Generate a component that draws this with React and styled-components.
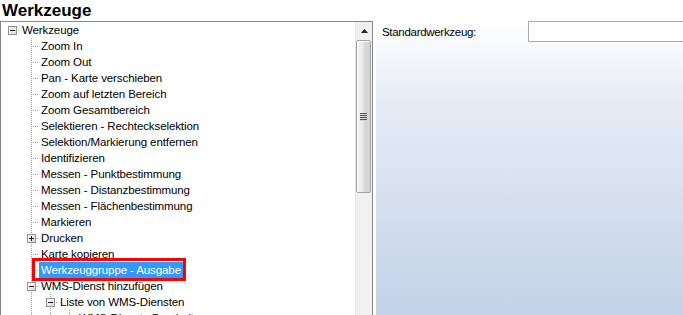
import React from 'react';
import styled, { createGlobalStyle } from 'styled-components';

const GlobalStyle = createGlobalStyle`
    html, body {
        margin: 0;
        padding: 0;
        background: #fff;
        overflow: hidden;
    }
    body {
        font-family: "Liberation Sans", Arial, sans-serif;
    }
`;

const Page = styled.div`
    display: flex;
    flex-direction: column;
    height: 100vh;
`;

const Title = styled.div`
    height: 21px;
    line-height: 21px;
    padding-left: 2px;
    font-size: 17px;
    font-weight: bold;
    color: #000;
`;

const Main = styled.div`
    flex: 1;
    display: flex;
    min-height: 0;
`;

const TreeBox = styled.div`
    width: 373px;
    box-sizing: border-box;
    border: 1px solid #828790;
    border-bottom: none;
    display: flex;
    background: #fff;
`;

const TreeList = styled.div`
    flex: 1;
    overflow: hidden;
    font-size: 11.5px;
    letter-spacing: -0.1px;
    color: #000;
`;

const Row = styled.div`
    display: flex;
    height: 16px;
`;

const dots = (dir) =>
    `repeating-linear-gradient(${dir}, #a0a0a0 0 1px, transparent 1px 2px)`;

const Guide = styled.div`
    width: 19px;
    flex: none;
    background-image: ${(p) => (p.$line ? dots('to bottom') : 'none')};
    background-size: 1px 16px;
    background-position: 11px 0;
    background-repeat: no-repeat;
`;

const Joint = styled.div`
    width: 19px;
    flex: none;
    display: flex;
    align-items: center;
    background-image: ${(p) =>
        p.$root ? dots('to right') : `${dots('to bottom')}, ${dots('to right')}`};
    background-size: ${(p) =>
        p.$root ? '8px 1px' : `1px ${p.$next ? 16 : 8}px, 8px 1px`};
    background-position: ${(p) => (p.$root ? '11px 8px' : '11px 0, 11px 8px')};
    background-repeat: no-repeat;
`;

const ExpanderIcon = styled.svg`
    margin-left: 7px;
    display: block;
`;

const Label = styled.div`
    position: relative;
    padding: 0 2px;
    line-height: 16px;
    white-space: nowrap;
    background: ${(p) => (p.$selected ? '#3399ff' : 'transparent')};
    color: ${(p) => (p.$selected ? '#fff' : '#000')};

    ${(p) =>
        p.$marked &&
        `
        &::after {
            content: '';
            position: absolute;
            top: -4px;
            bottom: -3px;
            left: -7px;
            right: -3px;
            border: 3px solid #f00;
        }
    `}
`;

const ScrollBar = styled.div`
    width: 17px;
    flex: none;
    display: flex;
    flex-direction: column;
    background: #f0f0f0;
    border-left: 1px solid #e6e6e6;
    box-sizing: border-box;
`;

const ArrowButton = styled.div`
    height: 18px;
    display: flex;
    align-items: center;
    justify-content: center;
`;

const Thumb = styled.div`
    height: 153px;
    margin: 0 1px 0 0;
    box-sizing: border-box;
    border: 1px solid #a3a3a3;
    border-radius: 2px;
    background: linear-gradient(to right, #f4f4f4 0%, #eaeaea 45%, #dadada 55%, #d2d2d2 100%);
    box-shadow: inset 1px 1px 0 #fbfbfb;
    display: flex;
    align-items: center;
    justify-content: center;
`;

const Grip = styled.div`
    width: 7px;
    height: 8px;
    background: repeating-linear-gradient(to bottom, #555 0 1px, #d8d8d8 1px 2px);
`;

const Gap = styled.div`
    width: 3px;
    flex: none;
    background: #fff;
`;

const SidePanel = styled.div`
    flex: 1;
    overflow: hidden;
    padding-left: 6px;
    background: linear-gradient(
        to bottom,
        #ffffff 0%,
        #f6f8fb 10%,
        #e6ecf5 27%,
        #c2d2e8 100%
    );
`;

const FieldRow = styled.div`
    display: flex;
    align-items: center;
    height: 21px;
    font-size: 11.5px;
    letter-spacing: -0.3px;
`;

const FieldLabel = styled.label`
    width: 146px;
    flex: none;
    color: #000;
`;

const FieldInput = styled.input`
    flex: none;
    width: 220px;
    height: 21px;
    box-sizing: border-box;
    border: 1px solid #ababab;
    background: #fff;
    padding: 0 3px;
    font: inherit;
    outline: none;
`;

const tree = {
    label: 'Werkzeuge',
    open: true,
    children: [
        { label: 'Zoom In' },
        { label: 'Zoom Out' },
        { label: 'Pan - Karte verschieben' },
        { label: 'Zoom auf letzten Bereich' },
        { label: 'Zoom Gesamtbereich' },
        { label: 'Selektieren - Rechteckselektion' },
        { label: 'Selektion/Markierung entfernen' },
        { label: 'Identifizieren' },
        { label: 'Messen - Punktbestimmung' },
        { label: 'Messen - Distanzbestimmung' },
        { label: 'Messen - Flächenbestimmung' },
        { label: 'Markieren' },
        { label: 'Drucken', closed: true },
        { label: 'Karte kopieren' },
        { label: 'Werkzeuggruppe - Ausgabe', selected: true },
        {
            label: 'WMS-Dienst hinzufügen',
            open: true,
            more: true,
            children: [
                {
                    label: 'Liste von WMS-Diensten',
                    open: true,
                    more: true,
                    children: [{ label: 'WMS-Dienste Bearbeiten', more: true }],
                },
            ],
        },
    ],
};

function flatten(node, level, guides, hasNext, out) {
    out.push({ ...node, level, guides, hasNext });
    if (node.open && node.children) {
        node.children.forEach((child, i) => {
            const next = i < node.children.length - 1 || !!child.more;
            flatten(child, level + 1, level === 0 ? [] : [...guides, hasNext], next, out);
        });
    }
    return out;
}

const rows = flatten(tree, 0, [], false, []);

function Expander({ open }) {
    return (
        <ExpanderIcon width="9" height="9" viewBox="0 0 9 9">
            <rect x="0.5" y="0.5" width="8" height="8" fill="#fff" stroke="#919191" />
            <rect x="1" y="1" width="7" height="7" fill="url(#expGrad)" />
            <rect x="2" y="4" width="5" height="1" fill="#1a1a1a" />
            {!open && <rect x="4" y="2" width="1" height="5" fill="#1a1a1a" />}
        </ExpanderIcon>
    );
}

export default function App() {
    return (
        <Page>
            <GlobalStyle />
            <svg width="0" height="0" style={{ position: 'absolute' }}>
                <defs>
                    <linearGradient id="expGrad" x1="0" y1="0" x2="1" y2="1">
                        <stop offset="0" stopColor="#ffffff" />
                        <stop offset="1" stopColor="#d9d9d9" />
                    </linearGradient>
                </defs>
            </svg>
            <Title>Werkzeuge</Title>
            <Main>
                <TreeBox>
                    <TreeList>
                        {rows.map((row, i) => (
                            <Row key={i}>
                                {row.level > 0 && <Guide />}
                                {row.guides.map((g, j) => (
                                    <Guide key={j} $line={g} />
                                ))}
                                <Joint $root={row.level === 0} $next={row.hasNext}>
                                    {(row.open || row.closed) && <Expander open={row.open} />}
                                </Joint>
                                <Label $selected={row.selected} $marked={row.selected}>
                                    {row.label}
                                </Label>
                            </Row>
                        ))}
                    </TreeList>
                    <ScrollBar>
                        <ArrowButton>
                            <svg width="7" height="4" viewBox="0 0 7 4">
                                <path d="M0 4 L3.5 0 L7 4 Z" fill="#222" />
                            </svg>
                        </ArrowButton>
                        <Thumb>
                            <Grip />
                        </Thumb>
                    </ScrollBar>
                </TreeBox>
                <Gap />
                <SidePanel>
                    <FieldRow>
                        <FieldLabel>Standardwerkzeug:</FieldLabel>
                        <FieldInput type="text" defaultValue="" />
                    </FieldRow>
                </SidePanel>
            </Main>
        </Page>
    );
}
